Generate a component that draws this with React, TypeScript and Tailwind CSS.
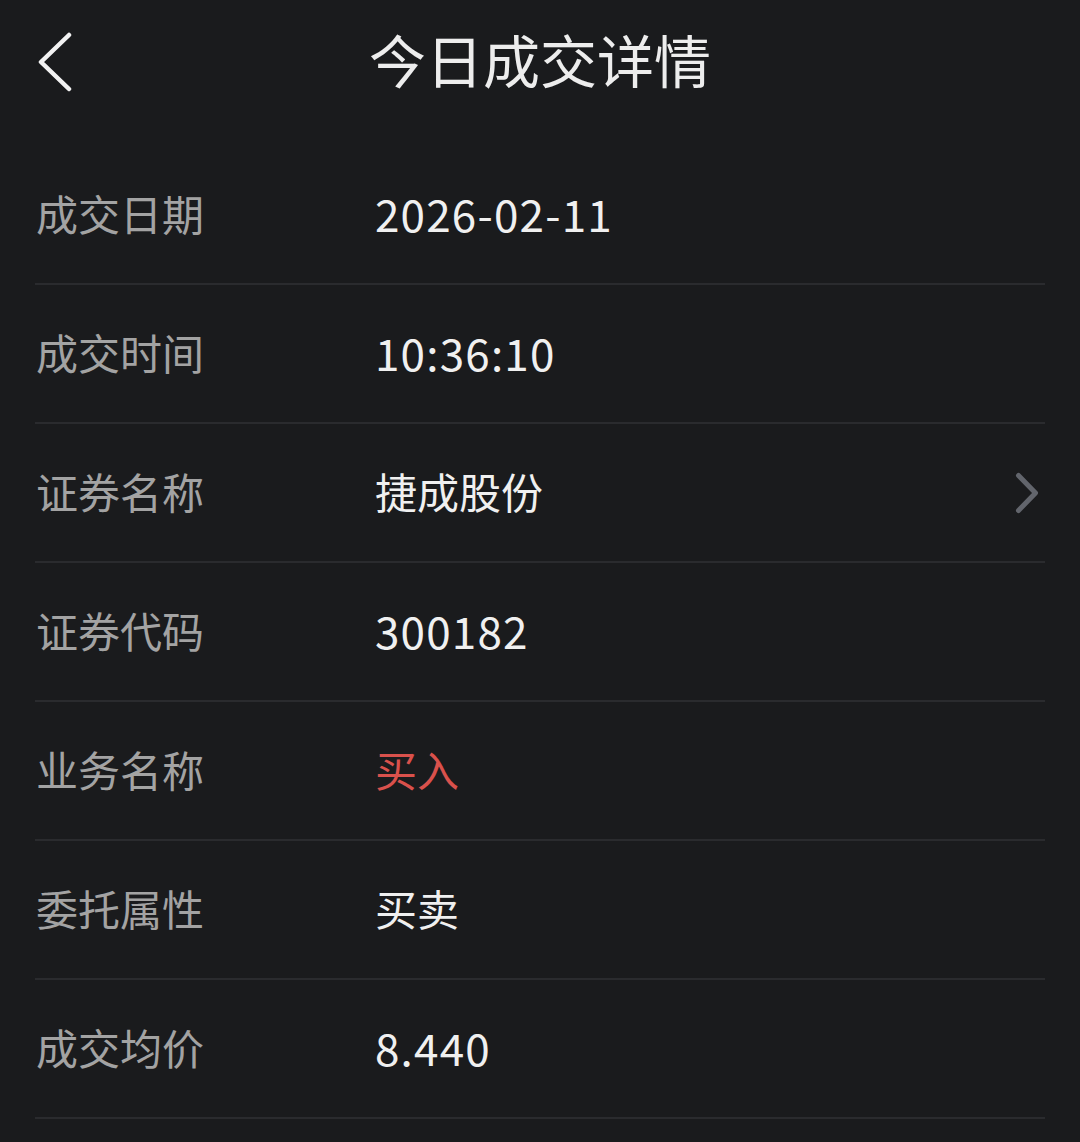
import React from "react";

const rows: { label: string; value: string; red?: boolean; arrow?: boolean; num?: boolean }[] = [
  { label: "成交日期", value: "2026-02-11", num: true },
  { label: "成交时间", value: "10:36:10", num: true },
  { label: "证券名称", value: "捷成股份", arrow: true },
  { label: "证券代码", value: "300182", num: true },
  { label: "业务名称", value: "买入", red: true },
  { label: "委托属性", value: "买卖" },
  { label: "成交均价", value: "8.440", num: true },
];

export default function App() {
  return (
    <div
      className="w-[1080px] h-[1142px] overflow-hidden bg-[#1a1b1d]"
      style={{ fontFamily: '"Noto Sans CJK SC", "Noto Sans", sans-serif' }}
    >
      <div className="relative h-[146px] flex items-start justify-center">
        <div className="absolute left-[36px] top-[32px] w-[40px] h-[60px]">
          <svg width="40" height="60" viewBox="0 0 40 60" fill="none">
            <path d="M33 3 L5 30 L33 57" stroke="#f2f2f2" strokeWidth="4.5" strokeLinecap="round" strokeLinejoin="round" />
          </svg>
        </div>
        <div className="mt-[22px] text-[57px] leading-[72px] text-[#ededed]">今日成交详情</div>
      </div>
      <div className="px-[35px]">
        {rows.map((r) => (
          <div key={r.label} className="h-[139px] pb-[4px] flex items-center border-b-2 border-[#2a2b2e]">
            <div className="w-[340px] pl-[1px] text-[42px] text-[#a3a3a3] leading-none">{r.label}</div>
            <div
              className={
                "flex-1 leading-none " +
                (r.num ? "text-[44px] tracking-[1.2px] " : "text-[42px] ") +
                (r.red ? "text-[#d9514c]" : "text-[#f0f0f0]")
              }
            >
              {r.value}
            </div>
            {r.arrow ? (
              <svg width="30" height="44" viewBox="0 0 30 44" fill="none" className="mr-[4px] mt-[4px]">
                <path d="M7.5 4.5 L24.5 22 L7.5 39.5" stroke="#62656c" strokeWidth="5" strokeLinecap="round" strokeLinejoin="round" />
              </svg>
            ) : null}
          </div>
        ))}
      </div>
    </div>
  );
}
